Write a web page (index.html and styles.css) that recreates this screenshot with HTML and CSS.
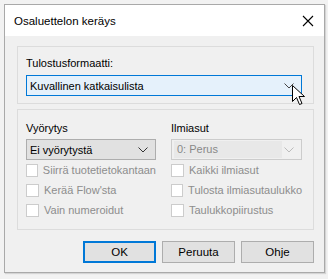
FILE: index.html
```html
<!DOCTYPE html>
<html lang="fi">
<head>
    <meta charset="UTF-8">
    <title>Osaluettelon keräys</title>
    <link rel="stylesheet" href="styles.css">
</head>
<body>
    <div class="dialog">
        <div class="title-bar">
            <span class="title">Osaluettelon keräys</span>
            <svg class="close" width="12" height="12" viewBox="0 0 12 12">
                <path d="M1 1 L11 11 M11 1 L1 11" stroke="#000" stroke-width="1.1" fill="none"/>
            </svg>
        </div>

        <div class="content">
            <!-- Output format -->
            <div class="group group-top">
                <div class="label">Tulostusformaatti:</div>
                <div class="combo focused">
                    <span>Kuvallinen katkaisulista</span>
                    <svg class="chevron" width="10" height="6" viewBox="0 0 10 6">
                        <path d="M0.5 0.5 L5 5 L9.5 0.5" stroke="#444" fill="none"/>
                    </svg>
                    <svg class="cursor" width="14" height="21" viewBox="0 0 14 21">
                        <path d="M0.5 0.5 L0.5 16.5 L4.5 12.5 L7.5 19.5 L10 18.5 L7 11.5 L12.5 11.5 Z" fill="#fff" stroke="#000"/>
                    </svg>
                </div>
            </div>

            <!-- Scrolling and appearances -->
            <div class="group group-bottom">
                <div class="column">
                    <div class="label">Vyörytys</div>
                    <div class="combo">
                        <span>Ei vyörytystä</span>
                        <svg class="chevron" width="10" height="6" viewBox="0 0 10 6">
                            <path d="M0.5 0.5 L5 5 L9.5 0.5" stroke="#333" fill="none"/>
                        </svg>
                    </div>
                    <label class="check"><span class="box"></span>Siirrä tuotetietokantaan</label>
                    <label class="check"><span class="box"></span>Kerää Flow'sta</label>
                    <label class="check"><span class="box"></span>Vain numeroidut</label>
                </div>
                <div class="column">
                    <div class="label">Ilmiasut</div>
                    <div class="combo disabled">
                        <span class="value">0: Perus</span>
                        <svg class="chevron" width="10" height="6" viewBox="0 0 10 6">
                            <path d="M0.5 0.5 L5 5 L9.5 0.5" stroke="#bbb" fill="none"/>
                        </svg>
                    </div>
                    <label class="check"><span class="box"></span>Kaikki ilmiasut</label>
                    <label class="check"><span class="box"></span>Tulosta ilmiasutaulukko</label>
                    <label class="check"><span class="box"></span>Taulukkopiirustus</label>
                </div>
            </div>

            <div class="buttons">
                <button class="btn default">OK</button>
                <button class="btn">Peruuta</button>
                <button class="btn">Ohje</button>
            </div>
        </div>
    </div>
</body>
</html>
```

FILE: styles.css
```css
body {
    margin: 0;
    padding: 4px;
    background: #f2f2f2;
    font-family: 'Liberation Sans', Arial, sans-serif;
    font-size: 11px;
    color: #000;
}

.dialog {
    width: 319px;
    height: 267px;
    border: 1px solid #a9a9a9;
    box-shadow: 1px 1px 1px rgba(0, 0, 0, 0.12);
    background: #f0f0f0;
    display: flex;
    flex-direction: column;
    white-space: nowrap;
}

.title-bar {
    height: 31px;
    background: #fff;
    display: flex;
    align-items: center;
    justify-content: space-between;
    padding: 0 10px 0 9px;
}

.title {
    font-size: 11.5px;
    padding-top: 1px;
}

.close {
    margin-top: 1px;
}

.content {
    padding: 10px 10px 0 12px;
}

.group {
    border: 1px solid #dcdcdc;
    box-sizing: border-box;
}

.group-top {
    height: 58px;
    padding: 8px 11px 0 8px;
}

.label {
    height: 16px;
    line-height: 16px;
}

.combo {
    position: relative;
    height: 21px;
    box-sizing: border-box;
    border: 1px solid #adadad;
    background: #e1e1e1;
    display: flex;
    align-items: center;
    justify-content: space-between;
    padding: 0 7px 0 3px;
    margin-top: 4px;
}

.combo.focused {
    border-color: #0078d7;
    background: #e5f1fb;
}

.combo.disabled {
    border-color: #cccccc;
    background: #f0f0f0;
    padding-left: 2px;
}

.combo.disabled .value {
    background: #e8e8e8;
    color: #888;
    width: 105px;
    height: 17px;
    line-height: 17px;
    padding-left: 3px;
}

.cursor {
    position: absolute;
    right: -5px;
    top: 9px;
}

.group-bottom {
    margin-top: 5px;
    height: 121px;
    padding: 10px 11px 0 8px;
    display: grid;
    grid-template-columns: 130px 131px;
    column-gap: 15px;
}

.group-bottom .combo {
    margin-top: 3px;
}

.check {
    display: flex;
    align-items: center;
    gap: 5px;
    height: 20px;
    color: #8d8d8d;
}

.box {
    width: 11px;
    height: 11px;
    border: 1px solid #cccccc;
    background: #fff;
}

.buttons {
    display: flex;
    justify-content: flex-end;
    gap: 6px;
    margin-top: 11px;
}

.btn {
    width: 73px;
    height: 22px;
    box-sizing: border-box;
    border: 1px solid #adadad;
    background: #e1e1e1;
    font-family: 'Liberation Sans', Arial, sans-serif;
    font-size: 11.5px;
    color: #000;
    padding: 0;
}

.btn.default {
    border: 2px solid #0078d7;
}
```
